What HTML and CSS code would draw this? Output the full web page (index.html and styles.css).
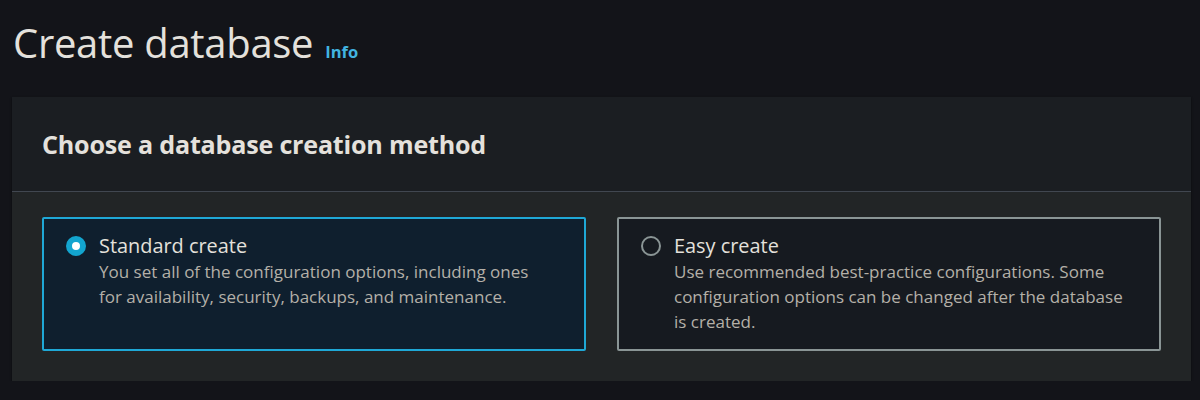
FILE: index.html
```html
<!DOCTYPE html>
<html>
<head>
<meta charset="utf-8">
<link rel="stylesheet" href="styles.css">
</head>
<body>
<div class="page">
  <div class="page-header">
    <h1 class="page-title">Create database</h1>
    <a class="info">Info</a>
  </div>
  <section class="container">
    <div class="container-header">
      <h2>Choose a database creation method</h2>
    </div>
    <div class="container-body">
      <div class="tiles">
        <div class="tile selected">
          <span class="radio checked"></span>
          <div class="tile-text">
            <div class="tile-label">Standard create</div>
            <div class="tile-desc">You set all of the configuration options, including ones for availability, security, backups, and maintenance.</div>
          </div>
        </div>
        <div class="tile">
          <span class="radio"></span>
          <div class="tile-text">
            <div class="tile-label">Easy create</div>
            <div class="tile-desc">Use recommended best-practice configurations. Some configuration options can be changed after the database is created.</div>
          </div>
        </div>
      </div>
    </div>
  </section>
</div>
</body>
</html>
```
FILE: styles.css
```css
html, body {
  margin: 0;
  padding: 0;
  background: #131419;
  font-family: "Open Sans", "Noto Sans", sans-serif;
  color: #e4e1dc;
}
.page {
  padding: 16px 9px 0 12px;
}
.page-header {
  display: flex;
  align-items: baseline;
  gap: 12px;
  padding-left: 1px;
  height: 81px;
}
.page-title {
  margin: 0;
  font-size: 40px;
  font-weight: 400;
  letter-spacing: -0.3px;
  color: #e4e1dc;
  line-height: 54px;
}
.info {
  color: #42b4e0;
  font-weight: 700;
  font-size: 16.5px;
}
.container {
  background: #222526;
  box-shadow: 0 1px 2px rgba(0,0,0,0.6);
}
.container-header {
  background: #1b1e22;
  height: 94px;
  display: flex;
  align-items: center;
  padding-left: 30px;
  border-bottom: 1px solid #414750;
}
.container-header h2 {
  margin: 0;
  font-size: 25.1px;
  font-weight: 700;
  color: #e4e1dc;
  letter-spacing: -0.2px;
}
.container-body {
  padding: 25px 30px 30px 30px;
}
.tiles {
  display: grid;
  grid-template-columns: 1fr 1fr;
  gap: 31px;
}
.tile {
  display: flex;
  gap: 13px;
  height: 134px;
  box-sizing: border-box;
  padding: 15px 33px 0 22px;
  background: #161a20;
  border: 2px solid #8a9595;
  border-radius: 2px;
}
.tile.selected {
  background: #0f1f2e;
  border-color: #1fa8d6;
}
.radio {
  flex: none;
  width: 20px;
  height: 20px;
  box-sizing: border-box;
  border-radius: 50%;
  border: 2px solid #8a9595;
  margin-top: 2px;
}
.radio.checked {
  border: 6px solid #13a5cf;
  background: #ffffff;
}
.tile-text {
  flex: 1;
  min-width: 0;
}
.tile-label {
  font-size: 19.9px;
  color: #e4e1dc;
  line-height: 24px;
}
.tile-desc {
  margin-top: 1px;
  font-size: 17px;
  line-height: 25px;
  color: #b4b0a8;
}
```
